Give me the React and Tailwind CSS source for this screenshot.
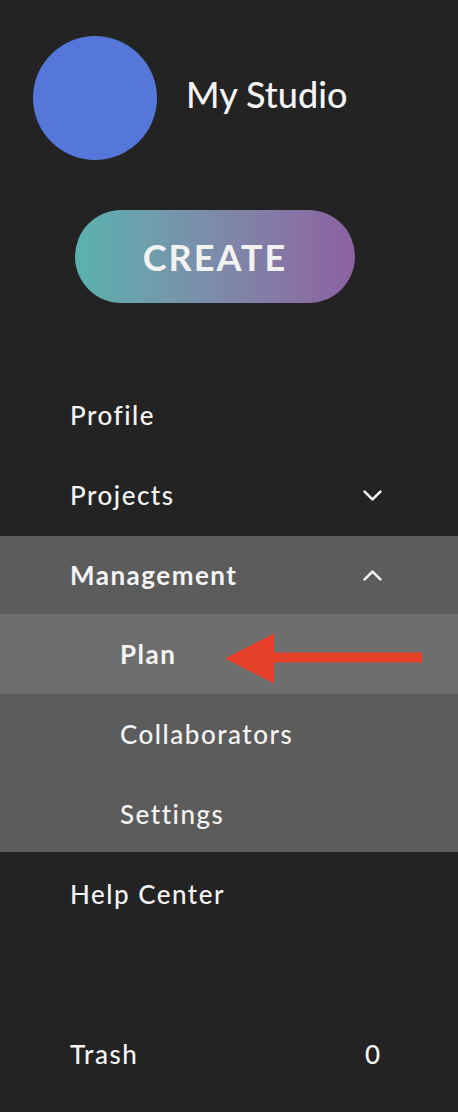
const font = { fontFamily: 'Lato, "Noto Sans", sans-serif' }

function Chevron({ up = false }) {
  return (
    <svg width="19" height="11" viewBox="0 0 19 11" fill="none" stroke="currentColor" strokeWidth="2.6" strokeLinecap="round" strokeLinejoin="round">
      <polyline points={up ? '1.6,9.4 9.5,1.6 17.4,9.4' : '1.6,1.6 9.5,9.4 17.4,1.6'} />
    </svg>
  )
}

function Row({ label, className = '', indent = false, bold = false, right = null }) {
  return (
    <div className={`flex items-center justify-between pr-[76px] ${indent ? 'pl-[120px]' : 'pl-[70px]'} ${className}`}>
      <span className={`text-[26px] tracking-[1.5px] ${bold ? 'font-bold' : 'font-medium'}`}>{label}</span>
      {right && <span className="flex w-[19px] justify-center">{right}</span>}
    </div>
  )
}

export default function App() {
  return (
    <div className="min-h-[1112px] w-[458px] bg-[#232323] text-[#f4f4f4]" style={font}>
      <div className="flex items-center gap-[29px] pl-[33px] pt-[36px]">
        <div className="h-[124px] w-[124px] rounded-full bg-[#5477d9]" />
        <span className="mb-[8px] text-[36px] font-medium">My Studio</span>
      </div>

      <button className="ml-[75px] mt-[50px] flex h-[93px] w-[280px] items-center justify-center rounded-full bg-gradient-to-r from-[#58b2b0] to-[#8c61a1] text-[36px] font-bold tracking-[2px] text-[#f2f2f2]">
        CREATE
      </button>

      <nav className="mt-[73px]">
        <Row label="Profile" className="h-[80px] pb-[2px]" />
        <Row label="Projects" className="h-[80px] pb-[2px]" right={<Chevron />} />
        <Row label="Management" bold className="h-[78px] bg-[#5c5c5c]" right={<Chevron up />} />
        <div className="relative">
          <Row label="Plan" bold indent className="h-[80px] bg-[#6e6e6e] pt-[1px]" />
          <svg className="absolute left-[225px] top-[19px]" width="198" height="51" viewBox="0 0 198 51">
            <polygon points="0,25.5 49,0.5 49,50.5" fill="#e8412a" />
            <rect x="45" y="19.5" width="152" height="10" fill="#e8412a" />
          </svg>
        </div>
        <Row label="Collaborators" indent className="h-[79px] bg-[#5c5c5c] pt-[2px]" />
        <Row label="Settings" indent className="h-[79px] bg-[#5c5c5c] pt-[4px]" />
        <Row label="Help Center" className="h-[82px] pt-[2px]" />
        <div className="h-[80px]" />
        <Row label="Trash" className="h-[80px]" right={<span className="text-[26px] font-medium">0</span>} />
      </nav>
    </div>
  )
}
